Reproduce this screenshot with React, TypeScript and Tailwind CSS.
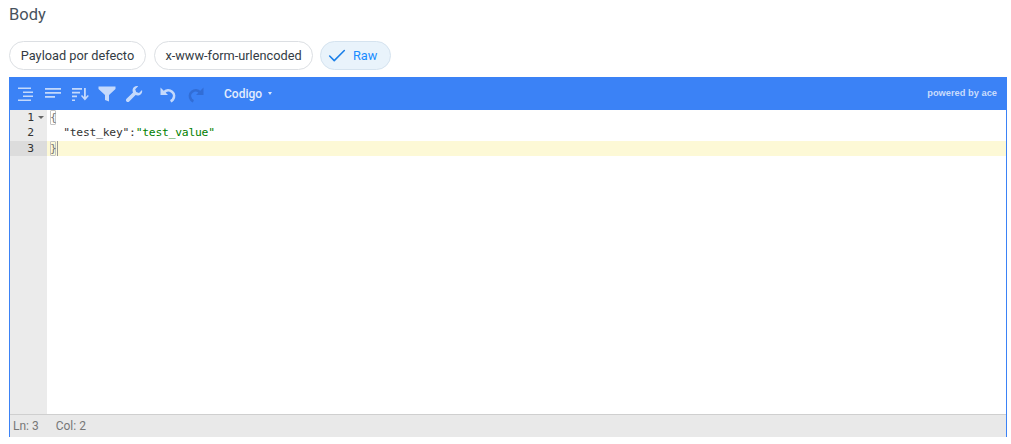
import { Check } from 'lucide-react'

const Chip = ({ label, active, className }: { label: string; active?: boolean; className: string }) => (
  <div
    className={
      (active
        ? 'h-[29px] flex items-center pl-[5px] gap-[5px] rounded-full border border-[#d5e3ef] bg-[#e9f3fb] text-[#1a8cff] '
        : 'h-[29px] flex items-center justify-center rounded-full border border-[#dcdfe3] bg-white text-[#333b44] ') + className
    }
  >
    {active && <Check className="w-[22px] h-[22px]" strokeWidth={1.7} color="#1a7fe8" />}
    <span>{label}</span>
  </div>
)

const ToolIcon = ({ children, dim }: { children: React.ReactNode; dim?: boolean }) => (
  <svg viewBox="0 0 18 18" className={dim ? 'w-[18px] h-[18px] opacity-30' : 'w-[18px] h-[18px] opacity-70'}>
    {children}
  </svg>
)

const Line = ({ n, active, fold, children }: { n: number; active?: boolean; fold?: boolean; children?: React.ReactNode }) => (
  <div className={active ? 'flex h-[15.4px] bg-[#fdf9d6]' : 'flex h-[15.4px]'}>
    <div className={active ? 'w-[37px] shrink-0 bg-[#dcdcdc] relative pr-[13px] text-right text-[#333]' : 'w-[37px] shrink-0 bg-[#ebebeb] relative pr-[13px] text-right text-[#333]'}>
      {n}
      {fold && <span className="absolute left-[28px] top-[6px] w-0 h-0 border-x-[3px] border-x-transparent border-t-[3px] border-t-[#666]" />}
    </div>
    <div className="pl-[3px] whitespace-pre relative tracking-[-0.23px]">{children}</div>
  </div>
)

const Bracket = ({ c, cursor }: { c: string; cursor?: boolean }) => (
  <span className="relative inline-block">
    <span className="absolute left-0 top-0 w-[6px] h-[15px] border border-[#c4c4c4] rounded-[1px]" />
    <span className="relative text-[#777]">{c}</span>
    {cursor && <span className="absolute left-[7px] top-0 w-px h-[15px] bg-[#999]" />}
  </span>
)

export default function App() {
  return (
    <div className="w-[1011px] h-[444px] bg-white overflow-hidden font-['Roboto',sans-serif]">
      <div className="pl-[9px] pt-[5px] h-[41px] text-[16.5px] leading-[20px] text-[#47525d]">Body</div>

      <div className="flex pl-[9px] h-[36px] text-[12.75px]">
        <Chip label="Payload por defecto" className="w-[137px]" />
        <Chip label="x-www-form-urlencoded" className="w-[159px] ml-[8px]" />
        <Chip label="Raw" active className="w-[71px] ml-[7px]" />
      </div>

      <div className="ml-[9px] w-[998px] h-[360px] flex flex-col border-x border-[#3b82f6]">
        {/* Toolbar */}
        <div className="h-[33px] -mx-px bg-[#3b82f6] flex items-center pl-[8px] pr-[10px] text-white shrink-0">
          <div className="flex items-center gap-[9px]">
            <ToolIcon>
              <path d="M1 2.500h13V4H1zM6 6.500h10V8H6zM6 10.500h10V12H6zM1 14.500h13V16H1z" fill="#fff" />
            </ToolIcon>
            <ToolIcon>
              <path d="M1 3h16v1.700H1zM1 7h16v1.700H1zM1 11h10v1.700H1z" fill="#fff" />
            </ToolIcon>
            <ToolIcon>
              <path d="M1 3h10v1.700H1zM1 6.800h8v1.700H1zM1 10.600h5v1.700H1zM1 14.400h3v1.700H1zM13 3h1.800v9l2-2 1 1-3.900 4.500L10 11l1-1 2 2z" fill="#fff" />
            </ToolIcon>
            <ToolIcon>
              <path d="M0.500 1.500h17v2.500l-6.500 6v6.500l-4-1.500v-5L.5 4z" fill="#fff" />
            </ToolIcon>
            <ToolIcon>
              <path d="M17 5l-3 3-2.800-1L10.200 4.200l3-3C10.800.4 8 2 7.600 4.500 7.400 5.500 7.600 6.500 8 7.400L1.500 13.800c-.8.8-.8 2 0 2.700.8.800 1.900.8 2.700 0l6.400-6.400c.9.400 1.900.5 2.900.3C16 9.900 17.800 7.500 17 5z" fill="#fff" />
            </ToolIcon>
          </div>
          <div className="flex items-center gap-[10px] ml-[16px]">
            <ToolIcon>
              <path d="M5 7.500C7 5 10.500 4.800 13 6.800c2.500 2 2.600 5.500.8 7.800-.6.700-1.300 1.300-2.200 1.700" fill="none" stroke="#fff" strokeWidth="2.700" />
              <path d="M1.500 2.500v7.500H9z" fill="#fff" />
            </ToolIcon>
            <ToolIcon dim>
              <path d="M13 7.500C11 5 7.500 4.800 5 6.800c-2.500 2-2.600 5.500-.8 7.800.6.700 1.300 1.300 2.200 1.700" fill="none" stroke="#1d3f8f" strokeWidth="2.700" />
              <path d="M16.500 2.500v7.500H9z" fill="#1d3f8f" />
            </ToolIcon>
          </div>
          <div className="flex items-center ml-[19px] text-[12px] font-medium text-[#e3edfd]">
            <span>Codigo</span>
            <span className="ml-[6px] w-0 h-0 border-x-[2.5px] border-x-transparent border-t-[3px] border-t-[#d8e6fd]" />
          </div>
          <span className="ml-auto text-[9.3px] font-bold font-['Liberation_Sans',sans-serif] text-[#c9dcfc]">powered by ace</span>
        </div>

        {/* Code area */}
        <div className="flex-1 flex flex-col bg-white font-['DejaVu_Sans_Mono',monospace] text-[11.33px] leading-[15px] text-[#333] relative">
          <Line n={1} fold>
            <Bracket c="{" />
          </Line>
          <Line n={2}>
            {'  '}
            <span>"test_key"</span>:<span className="text-[#008000]">"test_value"</span>
          </Line>
          <Line n={3} active>
            <Bracket c="}" cursor />
          </Line>
          <div className="flex-1 w-[37px] bg-[#ebebeb]" />
        </div>

        {/* Status bar */}
        <div className="h-[23px] shrink-0 bg-[#e9e9e9] border-t border-[#cfcfcf] flex items-center gap-[17px] pl-[3px] text-[12px] text-[#777]">
          <span>Ln: 3</span>
          <span>Col: 2</span>
        </div>
      </div>
    </div>
  )
}
